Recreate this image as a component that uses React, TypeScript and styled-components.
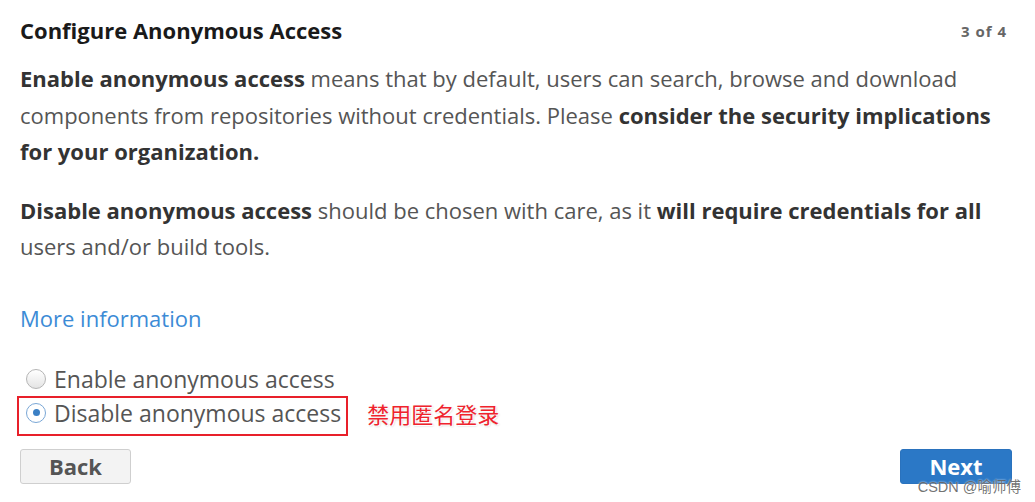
import styled, { createGlobalStyle } from 'styled-components';

const GlobalStyle = createGlobalStyle`
  html, body {
    margin: 0;
    padding: 0;
    background: #ffffff;
  }
  body {
    font-family: 'Open Sans', 'Liberation Sans', sans-serif;
  }
`;

function App() {
  return (
    <>
      <GlobalStyle />
      <Page>
        <Header>
          <Title>Configure Anonymous Access</Title>
          <Step>3 of 4</Step>
        </Header>

        <Paragraph>
          <strong>Enable anonymous access</strong> means that by default, users can search, browse and download
          <br />
          components from repositories without credentials. Please <strong>consider the security implications</strong>
          <br />
          <strong>for your organization.</strong>
        </Paragraph>

        <Paragraph>
          <strong>Disable anonymous access</strong> should be chosen with care, as it{' '}
          <strong>will require credentials for all</strong>
          <br />
          users and/or build tools.
        </Paragraph>

        <MoreLink href="#">More information</MoreLink>

        <RadioGroup>
          <RadioRow>
            <Radio />
            <RadioLabel>Enable anonymous access</RadioLabel>
          </RadioRow>
          <RadioRow>
            <Highlight>
              <Radio $checked />
              <RadioLabel>Disable anonymous access</RadioLabel>
            </Highlight>
            <Note>禁用匿名登录</Note>
          </RadioRow>
        </RadioGroup>

        <Footer>
          <Button>Back</Button>
          <Button $primary>Next</Button>
        </Footer>

        <Watermark>CSDN @喻师傅</Watermark>
      </Page>
    </>
  );
}

export default App;

const Page = styled.div`
  position: relative;
  width: 1035px;
  height: 502px;
  box-sizing: border-box;
  padding: 16px 23px 0 20px;
  color: #555;
  overflow: hidden;
`;

const Header = styled.div`
  display: flex;
  justify-content: space-between;
  align-items: center;
  height: 28px;
`;

const Title = styled.h1`
  margin: 0;
  font-size: 22px;
  font-weight: 700;
  color: #1a1a1a;
`;

const Step = styled.span`
  font-size: 15px;
  font-weight: 700;
  letter-spacing: 1px;
  color: #666;
  padding: 2px 5px 0 0;
`;

const Paragraph = styled.p`
  margin: 16px 0 22px;
  font-size: 22px;
  line-height: 36.5px;
  color: #555;
  white-space: nowrap;

  strong {
    font-weight: 700;
    color: #333;
  }

  & + & {
    margin-top: 22px;
  }
`;

const MoreLink = styled.a`
  display: block;
  margin-top: 35px;
  font-size: 22px;
  line-height: 36px;
  color: #3c8bd6;
  text-decoration: none;
`;

const RadioGroup = styled.div`
  display: flex;
  flex-direction: column;
  margin-top: 26px;
`;

const RadioRow = styled.div`
  display: flex;
  align-items: center;
  min-height: 34px;
`;

const Highlight = styled.div`
  display: flex;
  align-items: center;
  height: 40px;
  margin-left: -3px;
  padding: 0 5px 6px 1px;
  border: 2px solid #e8202a;
  box-sizing: border-box;
`;

const Radio = styled.span<{ $checked?: boolean }>`
  position: relative;
  width: 20px;
  height: 20px;
  margin: 0 8px 0 6px;
  border-radius: 50%;
  box-sizing: border-box;
  border: 1px solid ${(p) => (p.$checked ? '#7aa7d6' : '#b5b5b5')};
  background: ${(p) => (p.$checked ? '#ffffff' : 'linear-gradient(#ffffff, #e4e4e4)')};
  flex-shrink: 0;

  &::after {
    content: '';
    display: ${(p) => (p.$checked ? 'block' : 'none')};
    position: absolute;
    left: 5.5px;
    top: 5.5px;
    width: 7px;
    height: 7px;
    border-radius: 50%;
    background: #3b7fc4;
  }
`;

const RadioLabel = styled.span`
  font-size: 23px;
  color: #555;
  line-height: 34px;
  white-space: nowrap;
`;

const Note = styled.span`
  margin-left: 19px;
  padding-bottom: 6px;
  font-family: 'Noto Sans CJK SC', sans-serif;
  font-size: 22px;
  color: #f0232d;
  text-shadow: 1px 1px 0 #fff, 1px 1px 2px rgba(0, 0, 0, 0.25);
`;

const Footer = styled.div`
  display: flex;
  justify-content: space-between;
  align-items: center;
  margin-top: 13px;
`;

const Button = styled.button<{ $primary?: boolean }>`
  width: ${(p) => (p.$primary ? '112px' : '111px')};
  height: 35px;
  border-radius: 3px;
  border: 1px solid ${(p) => (p.$primary ? '#2a72bd' : '#cfcfcf')};
  background: ${(p) => (p.$primary ? '#2b78c6' : '#f3f3f3')};
  color: ${(p) => (p.$primary ? '#ffffff' : '#555')};
  font-family: 'Open Sans', 'Liberation Sans', sans-serif;
  font-size: 22px;
  font-weight: 700;
  line-height: 1;
  padding: 0;
  cursor: pointer;
`;

const Watermark = styled.span`
  position: absolute;
  right: 14px;
  bottom: 6px;
  font-family: 'Liberation Sans', 'Noto Sans CJK SC', sans-serif;
  font-size: 14.5px;
  color: rgba(90, 90, 90, 0.85);
  text-shadow: 0 0 2px #fff;
`;
